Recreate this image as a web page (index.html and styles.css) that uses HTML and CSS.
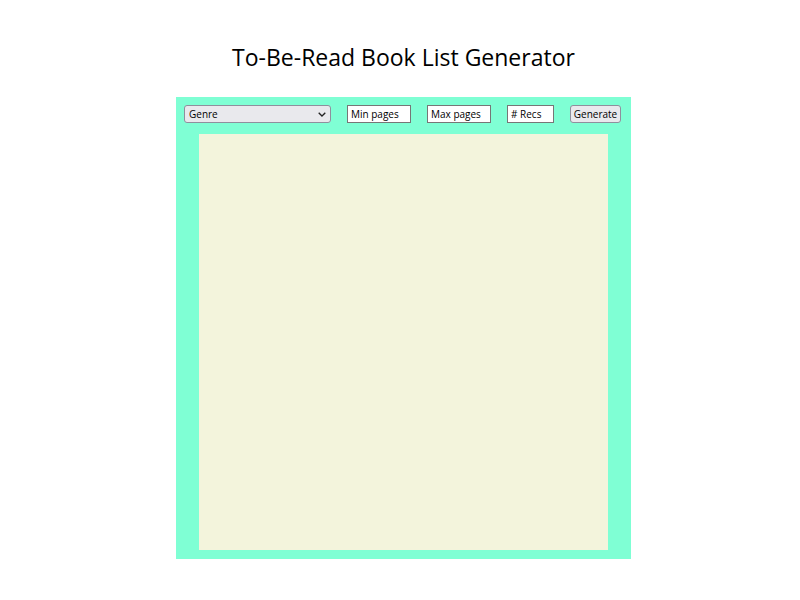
FILE: index.html
```html
<!DOCTYPE html>
<html>
<head>
<meta charset="utf-8">
<link rel="stylesheet" href="styles.css">
</head>
<body>
<h1 class="title">To-Be-Read Book List Generator</h1>
<div class="panel">
  <div class="controls">
    <div class="select-wrap">
      <select class="genre"><option>Genre</option></select>
      <svg class="chev" width="8" height="5" viewBox="0 0 8 5"><path d="M0.7 0.7 L4 4 L7.3 0.7" fill="none" stroke="#222" stroke-width="1.3"/></svg>
    </div>
    <input class="field w-min" type="text" placeholder="Min pages">
    <input class="field w-max" type="text" placeholder="Max pages">
    <input class="field w-recs" type="text" placeholder="# Recs">
    <button class="btn">Generate</button>
  </div>
  <div class="results"></div>
</div>
</body>
</html>
```
FILE: styles.css
```css
html, body {
  margin: 0;
  padding: 0;
  background: #fff;
}
body {
  padding-left: 7px;
  font-family: "Open Sans", "Noto Sans", sans-serif;
  color: #000;
}
.title {
  margin: 0;
  padding-top: 40px;
  height: 57px;
  font-size: 23px;
  font-weight: normal;
  text-align: center;
  line-height: 34px;
}
.panel {
  width: 455px;
  height: 462px;
  margin: 0 auto;
  background: #7fffd4;
  box-sizing: border-box;
  padding: 8px 10px 9px 8px;
  display: flex;
  flex-direction: column;
}
.controls {
  display: flex;
  align-items: flex-start;
  gap: 16px;
  height: 18px;
}
.select-wrap {
  position: relative;
  width: 147px;
  height: 18px;
}
.genre {
  display: block;
  appearance: none;
  -webkit-appearance: none;
  width: 100%;
  height: 18px;
  box-sizing: border-box;
  border: 1px solid #8f8f9d;
  border-radius: 3px;
  background: #e9e9ed;
  font-family: "Open Sans", sans-serif;
  font-size: 10px;
  line-height: 16px;
  padding: 0 4px;
  color: #000;
  margin: 0;
}
.chev {
  position: absolute;
  right: 5px;
  top: 7px;
}
.field {
  display: block;
  height: 18px;
  box-sizing: border-box;
  border: 1px solid #767676;
  background: #fff;
  font-family: "Open Sans", sans-serif;
  font-size: 10px;
  padding: 0 3px;
  margin: 0;
  border-radius: 0;
}
.field::placeholder {
  color: #000;
  opacity: 1;
}
.w-min, .w-max { width: 64px; }
.w-recs { width: 47px; }
.btn {
  display: block;
  width: 51px;
  height: 18px;
  box-sizing: border-box;
  border: 1px solid #8f8f9d;
  border-radius: 3px;
  background: #e9e9ed;
  font-family: "Open Sans", sans-serif;
  font-size: 10px;
  padding: 0;
  margin: 0;
  color: #000;
}
.results {
  width: 409px;
  height: 416px;
  margin: 11px 0 0 15px;
  background: #f3f4dc;
}
```
